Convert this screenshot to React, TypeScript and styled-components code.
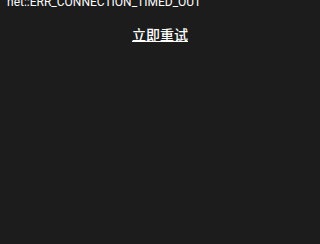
import React from "react";
import styled, { createGlobalStyle } from "styled-components";

const Global = createGlobalStyle`
  html, body { margin: 0; padding: 0; background: #1c1c1c; overflow: hidden; }
  body { width: 320px; height: 244px; }
`;

const Page = styled.div`
  width: 320px;
  height: 244px;
  background: #1c1c1c;
  display: flex;
  flex-direction: column;
  font-family: Roboto, "Noto Sans CJK SC", sans-serif;
  color: #ffffff;
  margin-top: -5px;
`;

const ErrorCode = styled.div`
  font-size: 12px;
  line-height: 14px;
  padding-left: 7px;
  white-space: nowrap;
`;

const RetryRow = styled.div`
  display: flex;
  justify-content: center;
  margin-top: 15px;
`;

const RetryLink = styled.a`
  font-family: "Noto Sans CJK SC", sans-serif;
  font-size: 14px;
  font-weight: 500;
  line-height: 20px;
  color: #ffffff;
  text-decoration: underline;
  cursor: pointer;
`;

export default function App() {
  return (
    <>
      <Global />
      <Page>
        <ErrorCode>net::ERR_CONNECTION_TIMED_OUT</ErrorCode>
        <RetryRow>
          <RetryLink>立即重试</RetryLink>
        </RetryRow>
      </Page>
    </>
  );
}
